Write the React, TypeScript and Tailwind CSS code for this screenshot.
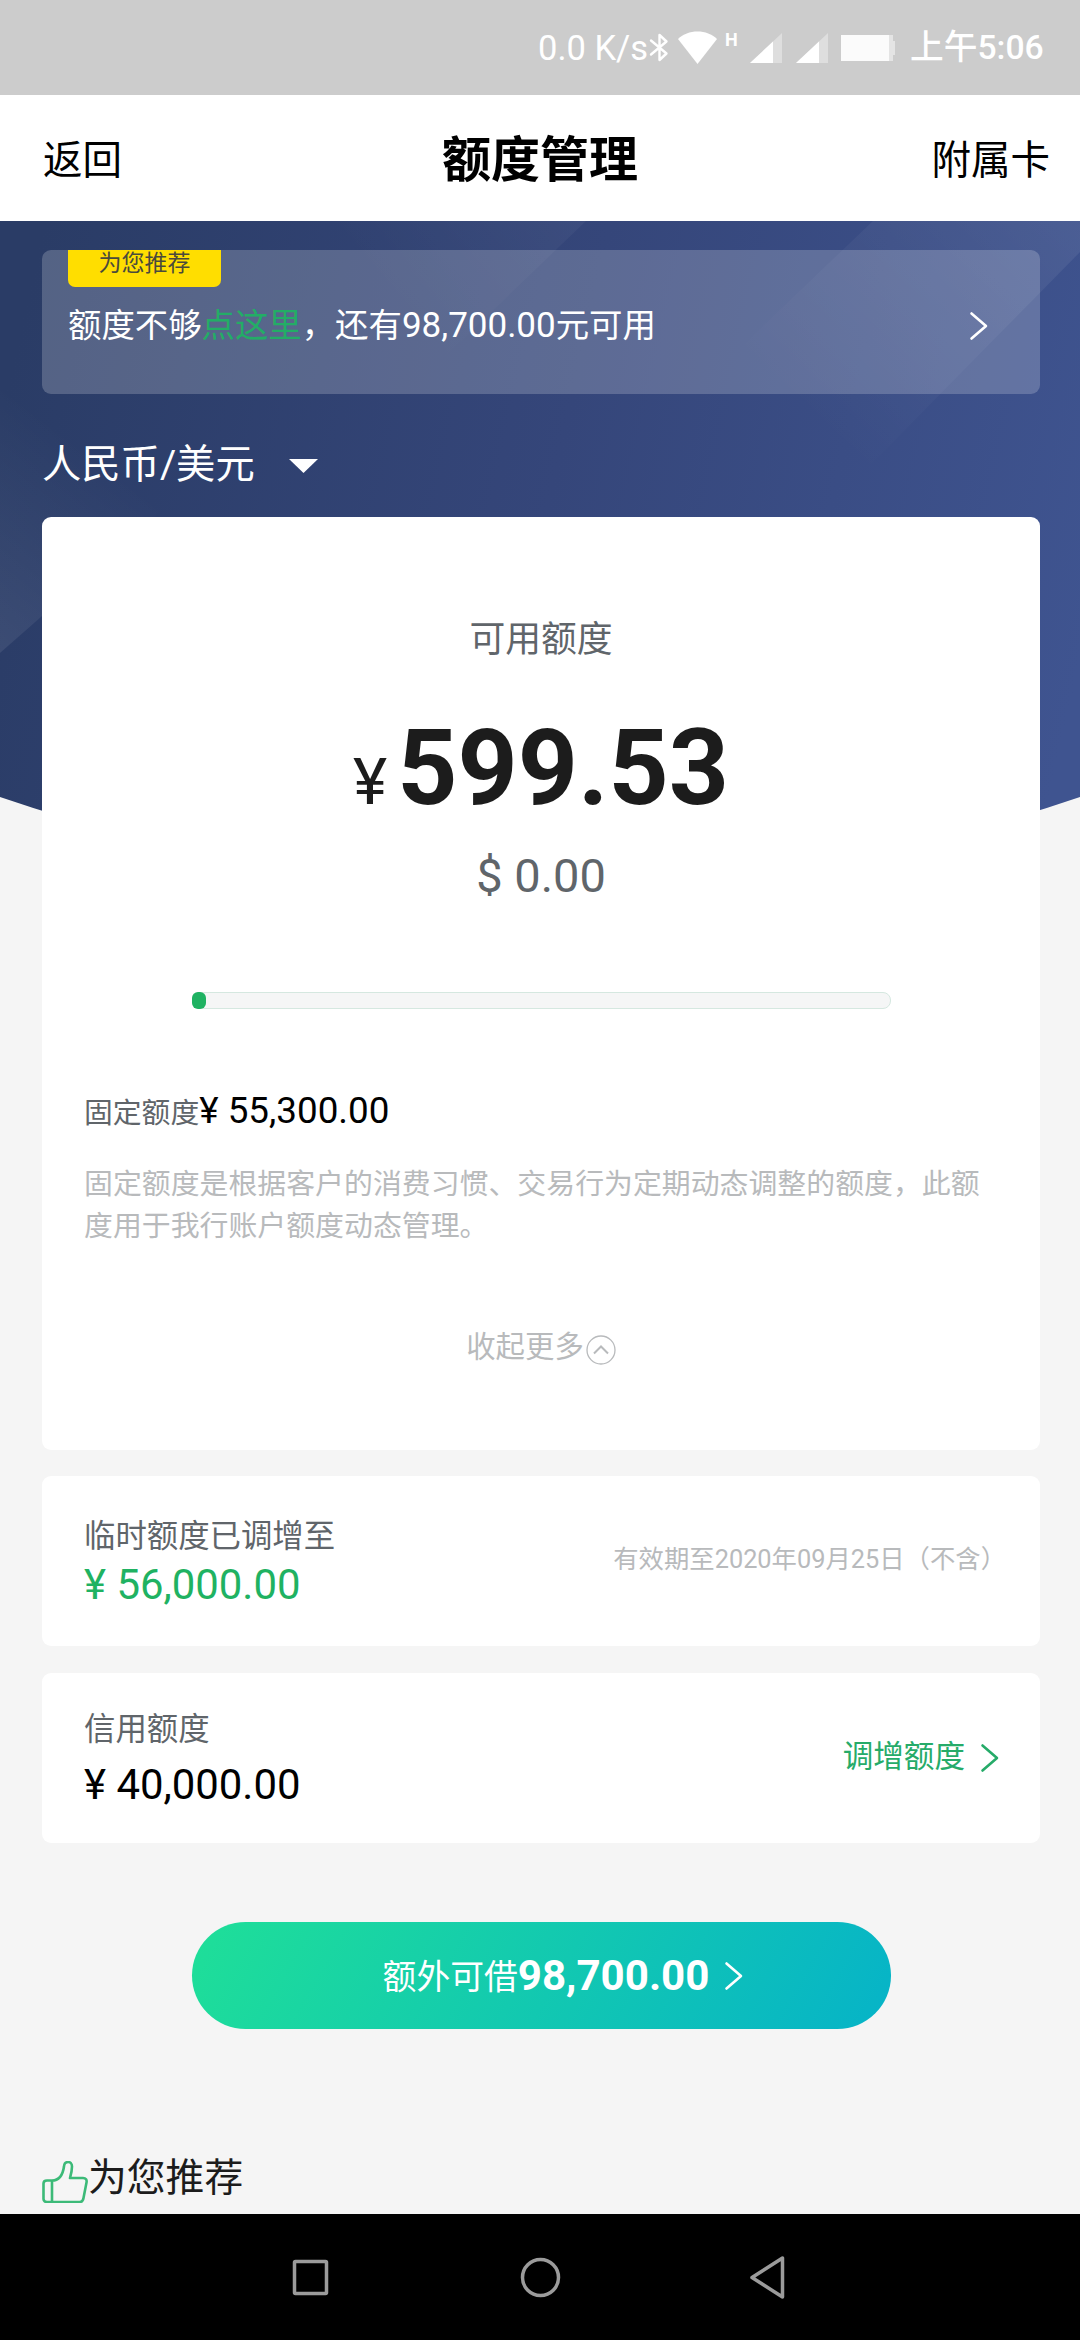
import type { ReactNode } from 'react';

interface ChevronProps {
    className?: string;
}

const Chevron = ({ className = '' }: ChevronProps) => (
    <svg
        className={`h-[30px] w-[20px] ${className}`}
        viewBox="0 0 20 30"
        fill="none"
        stroke="currentColor"
        strokeWidth="2.6"
        strokeLinecap="round"
        strokeLinejoin="round"
    >
        <path d="M2.5 2.5 17 15 2.5 27.5" />
    </svg>
);

const SignalIcon = () => (
    <svg className="h-[30px] w-[32px]" viewBox="0 0 32 30">
        <path d="M32 0v30H0z" fill="#fff" fillOpacity="0.35" />
        <path d="M23 8.5v21.5H0z" fill="#fff" />
    </svg>
);

const StatusBar = () => (
    <div className="flex h-[95px] items-center bg-[#cccccc] pl-[538px] text-[34.5px] leading-[40px] text-white">
        <span className="w-[111px] whitespace-nowrap">0.0 K/s</span>
        <svg
            className="h-[29px] w-[20px]"
            viewBox="0 0 20 29"
            fill="none"
            stroke="#fff"
            strokeWidth="2.4"
            strokeLinejoin="round"
            strokeLinecap="round"
        >
            <path d="M2 7.5 17.5 20.5 10.5 27V2l7 6.5L2 21.5" />
        </svg>
        <svg className="ml-[9px] h-[34px] w-[39px]" viewBox="0 0 39 34" fill="#fff">
            <path d="M0 8C5 3 12 .5 19.5 .5S34 3 39 8L19.5 33z" />
        </svg>
        <span className="mb-4 ml-2 w-[25px] text-[18px] leading-5 font-bold">H</span>
        <SignalIcon />
        <div className="w-[14px]" />
        <SignalIcon />
        <div className="ml-[13px] flex items-center">
            <div className="h-[26px] w-[48px] bg-[#fbfbfb]" />
            <div className="h-[26px] w-[4px] bg-[#e4e4e4]" />
            <div className="h-[14px] w-[2px] bg-[#e4e4e4]" />
        </div>
        <span className="ml-[15px] text-[33.7px] font-medium whitespace-nowrap">上午5:06</span>
    </div>
);

const TitleBar = () => (
    <header className="grid h-[126px] grid-cols-[1fr_auto_1fr] items-center bg-white pt-[5px] text-[39.5px] text-black">
        <span className="pl-[43px]">返回</span>
        <h1 className="text-[49px] font-bold">额度管理</h1>
        <span className="pr-[30px] text-right">附属卡</span>
    </header>
);

/** Curved blue backdrop with faint diagonal light beams. */
const Backdrop = () => (
    <svg className="absolute top-0 left-0 h-[660px] w-[1080px]" viewBox="0 0 1080 660">
        <defs>
            <linearGradient id="sky" x1="0" y1="200" x2="1080" y2="440" gradientUnits="userSpaceOnUse">
                <stop offset="0" stopColor="#2a3c66" />
                <stop offset="0.5" stopColor="#35467a" />
                <stop offset="1" stopColor="#3f5490" />
            </linearGradient>
            <linearGradient id="beamRight" x1="1060" y1="0" x2="840" y2="230" gradientUnits="userSpaceOnUse">
                <stop offset="0" stopColor="#fff" stopOpacity="0.07" />
                <stop offset="1" stopColor="#fff" stopOpacity="0" />
            </linearGradient>
            <linearGradient id="beamTop" x1="586" y1="0" x2="430" y2="130" gradientUnits="userSpaceOnUse">
                <stop offset="0" stopColor="#fff" stopOpacity="0.04" />
                <stop offset="1" stopColor="#fff" stopOpacity="0" />
            </linearGradient>
            <linearGradient id="beamLeft" x1="0" y1="430" x2="130" y2="260" gradientUnits="userSpaceOnUse">
                <stop offset="0" stopColor="#fff" stopOpacity="0.08" />
                <stop offset="1" stopColor="#fff" stopOpacity="0" />
            </linearGradient>
            <clipPath id="bowl">
                <path d="M0 0H1080V576Q540 760 0 576z" />
            </clipPath>
        </defs>
        <g clipPath="url(#bowl)">
            <path d="M0 0H1080V660H0z" fill="url(#sky)" />
            <path d="M0 432 300 168V0H0z" fill="url(#beamLeft)" />
            <path d="M586 0 390 188 300 0z" fill="url(#beamTop)" />
            <path d="M873 0H1080V31L835 280H580z" fill="url(#beamRight)" />
        </g>
    </svg>
);

const OfferBanner = () => (
    <div className="h-[144px] overflow-hidden rounded-[9px] bg-white/20 pl-[26px]">
        <div className="flex h-[37px] w-[153px] justify-center rounded-b-[7px] bg-[#ffde00] text-[23px] leading-[27px] text-[#4a4a3c]">
            为您推荐
        </div>
        <div className="mt-[19px] flex items-center justify-between pr-[51px] text-[33.4px] leading-[40px] text-white">
            <p>
                额度不够<span className="text-[#23ad66]">点这里</span>，还有<span className="text-[35px]">98,700.00</span>元可用
            </p>
            <Chevron />
        </div>
    </div>
);

const LimitCard = () => (
    <section className="h-[933px] rounded-[9px] bg-white px-[42px] pt-[99px]">
        <div className="text-center text-[35.8px] leading-[48px] text-[#60656a]">可用额度</div>
        <div className="mt-[43px] flex h-[124px] items-baseline justify-center leading-[124px] text-[#1c1c1c]">
            <span className="mr-[10px] text-[65px]">¥</span>
            <span className="text-[105px] font-bold">599.53</span>
        </div>
        <div className="mt-[15px] text-center text-[47px] leading-[60px] text-[#60656a]">$ 0.00</div>
        <div className="mx-auto mt-[86px] h-[17px] w-[699px] rounded-[8px] border border-[#d5e8e0] bg-[#f5f6f6]">
            <div className="-mt-px -ml-px h-[17px] w-[14px] rounded-[6px] bg-[#1fb262]" />
        </div>
        <div className="mt-[80px] h-[44px] text-[28.8px] leading-[44px] text-[#60656a]">
            固定额度<span className="text-[36.8px] text-black">¥ 55,300.00</span>
        </div>
        <p className="mt-[30px] text-[28.9px] leading-[42px] text-[#b8babc]">
            固定额度是根据客户的消费习惯、交易行为定期动态调整的额度，此额度用于我行账户额度动态管理。
        </p>
        <div className="mt-[78px] flex items-center justify-center text-[29.4px] leading-[44px] text-[#b8babc]">
            收起更多
            <svg className="mt-[5px] ml-[2px] h-[30px] w-[30px]" viewBox="0 0 30 30" fill="none" stroke="currentColor">
                <circle cx="15" cy="15" r="14" strokeWidth="1.3" />
                <path d="m8 18.5 7-7 7 7" strokeWidth="2" />
            </svg>
        </div>
    </section>
);

interface AmountRowProps {
    label: string;
    amount: string;
    amountClass: string;
    children: ReactNode;
}

const AmountRow = ({ label, amount, amountClass, children }: AmountRowProps) => (
    <section className="flex h-[170px] items-center justify-between rounded-[9px] bg-white pl-[42px]">
        <div>
            <div className="pt-px text-[31.4px] leading-[46px] text-[#60656a]">{label}</div>
            <div className={`text-[41.9px] leading-[50px] ${amountClass}`}>{amount}</div>
        </div>
        {children}
    </section>
);

const ThumbIcon = () => (
    <svg
        className="mt-[7px] h-[42px] w-[46px]"
        viewBox="0 0 46 42"
        fill="none"
        stroke="#3cba78"
        strokeWidth="2.6"
        strokeLinejoin="round"
    >
        <path d="M10 19.5c8 0 11-7 12-14C22.5-.5 30-.5 30 5.5c0 4-1 8-2 11.5h13c3 0 4 2 3.5 4.5l-3 15.5c-.5 3-2 4-4 4H5c-2 0-3.5-1-3.500-3V22.5c0-2 1.5-3 3.500-3zM10 19.5V41" />
    </svg>
);

const NavBar = () => (
    <nav className="h-[126px] bg-black">
        <svg className="h-[126px] w-[1080px]" viewBox="0 0 1080 126" fill="none" stroke="#9b9b9b" strokeWidth="3.5">
            <rect x="294.5" y="47.5" width="32" height="32" rx="1" />
            <circle cx="540.5" cy="63.5" r="18" />
            <path d="M782.5 44v39L752 63.5z" strokeLinejoin="round" />
        </svg>
    </nav>
);

export default function App() {
    return (
        <div className="flex h-[2340px] w-[1080px] flex-col overflow-hidden bg-[#f5f5f5] font-['Roboto','Noto_Sans_CJK_SC',sans-serif]">
            <StatusBar />
            <TitleBar />
            <main className="relative h-[1993px] overflow-hidden">
                <Backdrop />
                <div className="relative pt-[29px] pr-[40px] pl-[42px]">
                    <OfferBanner />
                    <div className="flex h-[123px] items-center pt-[19px] text-[39.3px] text-white">
                        人民币/美元
                        <svg className="mt-[2px] ml-[34px] h-[14px] w-[29px]" viewBox="0 0 29 14" fill="#fff">
                            <path d="M0 0h29L14.5 14z" />
                        </svg>
                    </div>
                    <LimitCard />
                    <div className="mt-[26px] flex flex-col gap-[27px]">
                        <AmountRow label="临时额度已调增至" amount="¥ 56,000.00" amountClass="text-[#1fb262]">
                            <span className="mr-[34px] mb-[3px] text-[25.35px] text-[#b8babc]">
                                有效期至2020年09月25日（不含）
                            </span>
                        </AmountRow>
                        <AmountRow label="信用额度" amount="¥ 40,000.00" amountClass="mt-[7px] text-black">
                            <div className="mr-[40px] flex items-center text-[30.6px] text-[#26ab69]">
                                <span className="-mt-[2px]">调增额度</span>
                                <Chevron className="ml-[15px]" />
                            </div>
                        </AmountRow>
                    </div>
                    <button className="mx-auto mt-[79px] flex h-[107px] w-[699px] items-center justify-center rounded-full bg-linear-[120deg,#1fdf98,#06b3c8] pl-[45px] text-[33.8px] text-white">
                        <span className="mt-[5px]">额外可借</span>
                        <span className="text-[42.1px] font-bold">98,700.00</span>
                        <Chevron className="ml-[15px]" />
                    </button>
                    <div className="mt-[120px] flex h-[58px] items-center text-[38.8px] leading-[58px] text-[#1c1c1c]">
                        <ThumbIcon />
                        为您推荐
                    </div>
                </div>
            </main>
            <NavBar />
        </div>
    );
}
